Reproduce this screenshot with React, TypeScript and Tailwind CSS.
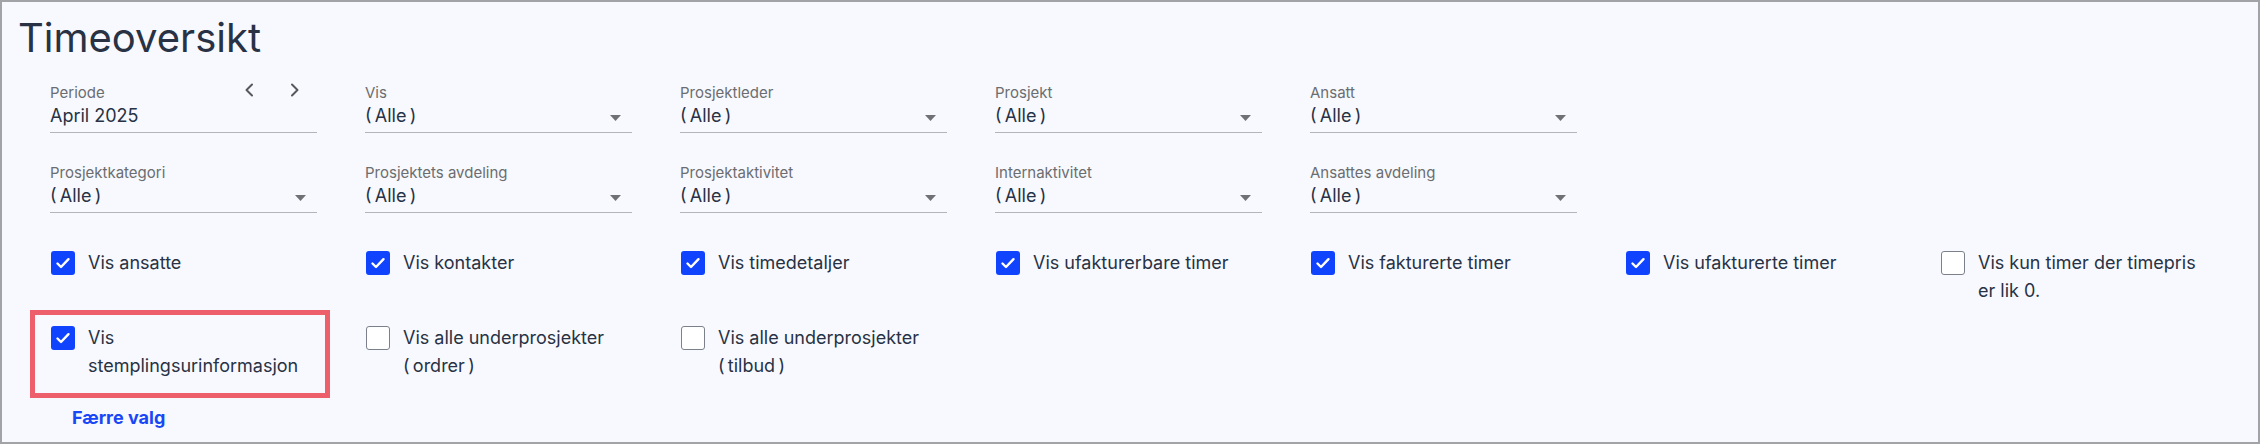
const font = { fontFamily: 'Inter, "Noto Sans", sans-serif' };

interface FieldProps {
  label: string;
  value: string;
  period?: boolean;
}

function Chevron({ dir }: { dir: 'left' | 'right' }) {
  return (
    <svg width="10" height="14" viewBox="0 0 10 14" fill="none">
      <path
        d={dir === 'left' ? 'M8 1.5 L2.5 7 L8 12.5' : 'M2 1.5 L7.5 7 L2 12.5'}
        stroke="#55595f"
        strokeWidth="2"
        strokeLinecap="round"
        strokeLinejoin="round"
      />
    </svg>
  );
}

function Field({ label, value, period = false }: FieldProps) {
  return (
    <div className="flex flex-col border-b border-[#b3b5b9] pb-[3px]">
      <div className="flex items-start justify-between">
        <span className="text-[15px] leading-[20px] text-[#6b6d70]">{label}</span>
        {period && (
          <div className="mr-[17px] flex gap-[36px]">
            <Chevron dir="left" />
            <Chevron dir="right" />
          </div>
        )}
      </div>
      <div className="flex items-center justify-between">
        <span className="text-[18px] leading-[26px] text-[#283244]">{value}</span>
        {!period && (
          <svg width="11" height="6" viewBox="0 0 11 6" className="mr-[11px] mt-[3px]">
            <path d="M0 0 H11 L5.5 6 Z" fill="#6f7174" />
          </svg>
        )}
      </div>
    </div>
  );
}

interface CheckProps {
  label: React.ReactNode;
  checked?: boolean;
  highlight?: boolean;
}

function Check({ label, checked = false, highlight = false }: CheckProps) {
  return (
    <div className="relative flex items-start gap-[13px]">
      {highlight && (
        <div className="pointer-events-none absolute -bottom-[18px] -left-[20px] -right-[13px] -top-[14px] border-[5px] border-[#ec5f6b]"></div>
      )}
      {checked ? (
        <div className="ml-[1px] mt-[2px] flex h-[24px] w-[24px] shrink-0 items-center justify-center rounded-[3px] bg-[#1043fd]">
          <svg width="24" height="24" viewBox="0 0 24 24" fill="none">
            <path
              d="M6.5 12.5 L10 16 L17.5 8.2"
              stroke="white"
              strokeWidth="2.4"
              strokeLinecap="round"
              strokeLinejoin="round"
            />
          </svg>
        </div>
      ) : (
        <div className="ml-[1px] mt-[2px] h-[24px] w-[24px] shrink-0 rounded-[3px] border border-[#7c808a] bg-white"></div>
      )}
      <span className="text-[18px] leading-[28px] text-[#283244]">{label}</span>
    </div>
  );
}

// narrow no-break spaces keep the parentheses attached to their word
const ALLE = '(\u202FAlle\u202F)';

export default function App() {
  return (
    <div
      style={font}
      className="flex h-[444px] w-full flex-col border-2 border-[#a2a3a7] bg-[#f7f9fe] pl-[16px] pt-[12px]"
    >
      <h1 className="text-[40px] leading-[48px] font-normal text-[#283244]">Timeoversikt</h1>

      <div className="flex flex-col pl-[32px] pr-[51px] pt-[21px]">
        <div className="grid grid-cols-7 gap-x-[48px] gap-y-[30px]">
          <Field label="Periode" value="April 2025" period />
          <Field label="Vis" value={ALLE} />
          <Field label="Prosjektleder" value={ALLE} />
          <Field label="Prosjekt" value={ALLE} />
          <Field label="Ansatt" value={ALLE} />
          <div></div>
          <div></div>
          <Field label="Prosjektkategori" value={ALLE} />
          <Field label="Prosjektets avdeling" value={ALLE} />
          <Field label="Prosjektaktivitet" value={ALLE} />
          <Field label="Internaktivitet" value={ALLE} />
          <Field label="Ansattes avdeling" value={ALLE} />
        </div>

        <div className="mt-[36px] grid grid-cols-7 gap-x-[48px] gap-y-[19px]">
          <Check label="Vis ansatte" checked />
          <Check label="Vis kontakter" checked />
          <Check label="Vis timedetaljer" checked />
          <Check label="Vis ufakturerbare timer" checked />
          <Check label="Vis fakturerte timer" checked />
          <Check label="Vis ufakturerte timer" checked />
          <Check label="Vis kun timer der timepris er lik 0." />
          <Check label="Vis stemplingsurinformasjon" checked highlight />
          <Check label={'Vis alle underprosjekter (\u202Fordrer\u202F)'} />
          <Check label={'Vis alle underprosjekter (\u202Ftilbud\u202F)'} />
        </div>

        <div className="mt-[24px] pl-[22px]">
          <button className="text-[18px] leading-[28px] font-bold text-[#1a47f6]">Færre valg</button>
        </div>
      </div>
    </div>
  );
}
